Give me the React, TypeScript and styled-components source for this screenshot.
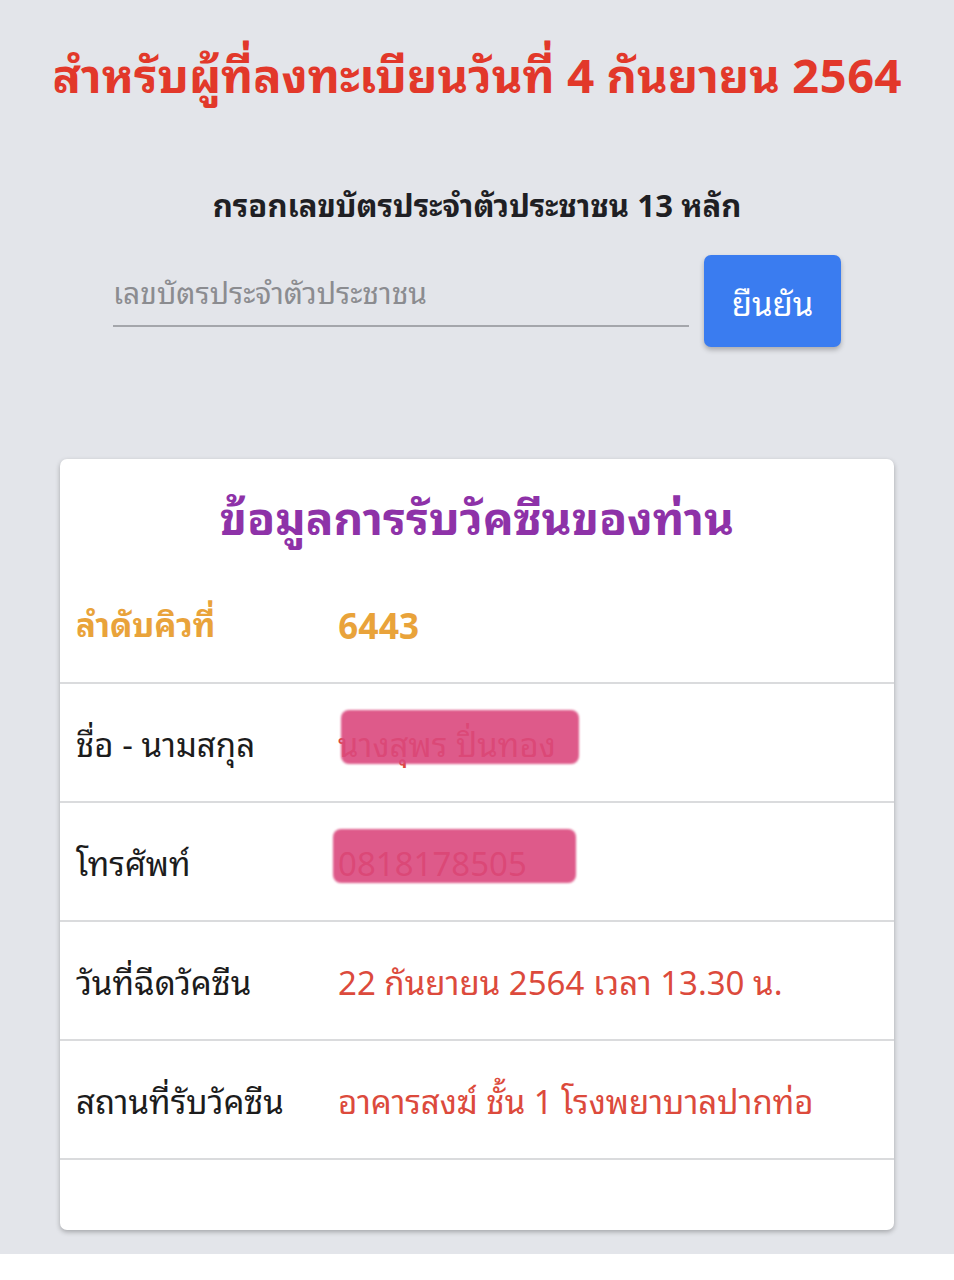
import React from "react";
import styled, { createGlobalStyle } from "styled-components";

const Global = createGlobalStyle`
  html, body { margin: 0; padding: 0; background: #ffffff; }
  body { font-family: "Noto Sans Thai Looped", "Garuda", "Loma", "Noto Sans", "Noto Sans Thai", "Liberation Sans", sans-serif; }
  * { box-sizing: border-box; }
`;

const Page = styled.div`
  background: #e3e5ea;
  padding: 0 60px 24px;
  display: flex;
  flex-direction: column;
  align-items: center;
`;

const Title = styled.h1`
  margin: 0;
  padding-top: 42px;
  height: 120px;
  font-size: 47px;
  line-height: 60px;
  font-weight: 700;
  color: #e2382a;
  text-align: center;
  white-space: nowrap;
`;

const Prompt = styled.h2`
  margin: 56px 0 0;
  font-size: 31px;
  line-height: 54px;
  font-weight: 700;
  color: #1f1f24;
  text-align: center;
  white-space: nowrap;
`;

const FormRow = styled.div`
  margin-top: 25px;
  display: flex;
  align-items: flex-start;
  gap: 15px;
`;

const Field = styled.input`
  width: 576px;
  height: 72px;
  border: none;
  border-bottom: 2px solid #a4a6ab;
  background: transparent;
  font-family: inherit;
  font-size: 30px;
  color: #333;
  padding: 0;
  outline: none;
  &::placeholder { color: #8b8c90; }
`;

const Button = styled.button`
  width: 137px;
  height: 92px;
  border: none;
  border-radius: 7px;
  background: #3a7cf0;
  color: #ffffff;
  font-family: inherit;
  font-size: 33px;
  font-weight: 400;
  box-shadow: 0 3px 5px rgba(0, 0, 0, 0.25);
`;

const Card = styled.section`
  margin-top: 112px;
  width: 100%;
  background: #ffffff;
  border-radius: 7px;
  box-shadow: 0 2px 5px rgba(0, 0, 0, 0.28);
  overflow: hidden;
`;

const CardTitle = styled.h3`
  margin: 0;
  height: 104px;
  display: flex;
  align-items: center;
  justify-content: center;
  padding-top: 6px;
  font-size: 46px;
  font-weight: 700;
  color: #8e32a8;
`;

const Row = styled.div<{ $last?: boolean; $first?: boolean }>`
  display: grid;
  grid-template-columns: 262px 1fr;
  align-items: center;
  height: ${(p) => (p.$last ? "72px" : "119px")};
  padding-left: 16px;
  border-top: ${(p) => (p.$first ? "none" : "2px solid #dadbdd")};
`;

const Label = styled.div<{ $tone?: "queue" }>`
  font-size: 33px;
  font-weight: ${(p) => (p.$tone === "queue" ? 700 : 400)};
  color: ${(p) => (p.$tone === "queue" ? "#e9a33a" : "#1c1c1c")};
  white-space: nowrap;
`;

const Value = styled.div<{ $tone?: "queue" | "red" }>`
  position: relative;
  display: inline-block;
  justify-self: start;
  font-size: ${(p) => (p.$tone === "queue" ? "35px" : "33px")};
  font-weight: ${(p) => (p.$tone === "queue" ? 700 : 400)};
  color: ${(p) => (p.$tone === "queue" ? "#e9a33a" : "#dc4a3c")};
  white-space: nowrap;
`;

const Redact = styled.span<{ $w: number; $dx: number }>`
  position: absolute;
  left: ${(p) => p.$dx}px;
  top: -6px;
  width: ${(p) => p.$w}px;
  height: 54px;
  border-radius: 8px;
  background: rgba(218, 72, 125, 0.9);
  filter: blur(1px);
`;

const rows: { label: string; value: string; tone?: "queue" | "red"; redact?: number; dx?: number }[] = [
  { label: "ลำดับคิวที่", value: "6443", tone: "queue" },
  { label: "ชื่อ - นามสกุล", value: "นางสุพร ปิ่นทอง", tone: "red", redact: 238, dx: 3 },
  { label: "โทรศัพท์", value: "0818178505", tone: "red", redact: 243, dx: -5 },
  { label: "วันที่ฉีดวัคซีน", value: "22 กันยายน 2564 เวลา 13.30 น.", tone: "red" },
  { label: "สถานที่รับวัคซีน", value: "อาคารสงฆ์ ชั้น 1 โรงพยาบาลปากท่อ", tone: "red" },
];

export default function App() {
  return (
    <>
      <Global />
      <Page>
        <Title>สำหรับผู้ที่ลงทะเบียนวันที่ 4 กันยายน 2564</Title>
        <Prompt>กรอกเลขบัตรประจำตัวประชาชน 13 หลัก</Prompt>
        <FormRow>
          <Field placeholder="เลขบัตรประจำตัวประชาชน" />
          <Button>ยืนยัน</Button>
        </FormRow>
        <Card>
          <CardTitle>ข้อมูลการรับวัคซีนของท่าน</CardTitle>
          {rows.map((r, i) => (
            <Row key={r.label} $first={i === 0}>
              <Label $tone={r.tone === "queue" ? "queue" : undefined}>{r.label}</Label>
              <Value $tone={r.tone}>
                {r.value}
                {r.redact ? <Redact $w={r.redact} $dx={r.dx ?? 0} /> : null}
              </Value>
            </Row>
          ))}
          <Row $last />
        </Card>
      </Page>
    </>
  );
}
